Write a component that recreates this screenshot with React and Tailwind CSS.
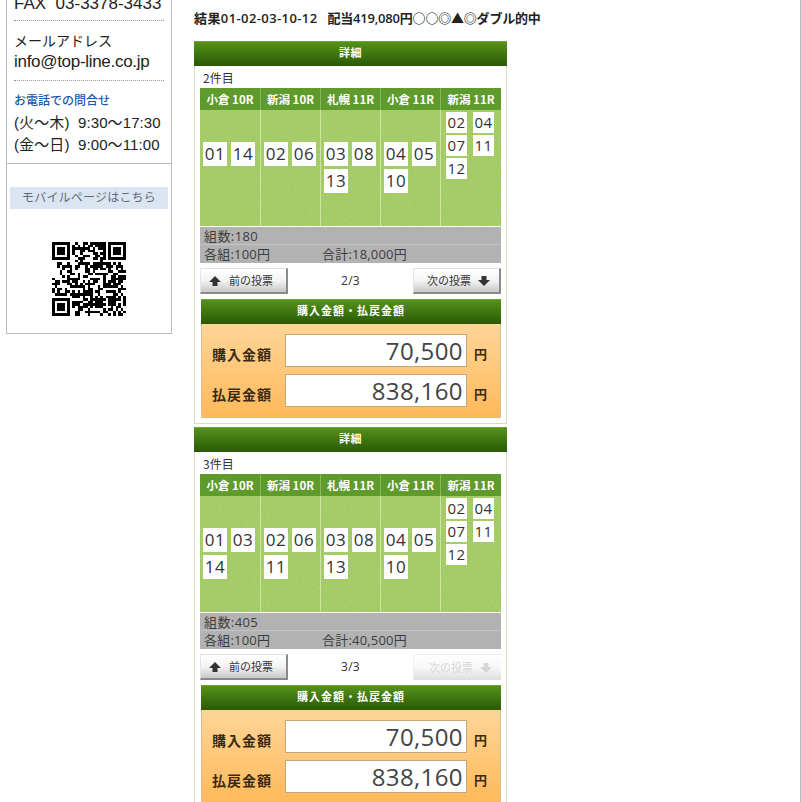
const jp = "font-['Noto_Sans_CJK_JP',sans-serif]";
const droid = "font-['Open_Sans','Noto_Sans_CJK_JP',sans-serif]";
const helv = "font-['Liberation_Sans','Noto_Sans_CJK_JP',sans-serif]";

function QrCode() {
  const size = 29;
  let seed = 40503;
  const cells = [];
  const inFinder = (x, y) =>
    (x < 8 && y < 8) || (x >= size - 8 && y < 8) || (x < 8 && y >= size - 8);
  for (let y = 0; y < size; y++) {
    for (let x = 0; x < size; x++) {
      seed = (seed * 75 + 74) % 65537;
      if (!inFinder(x, y) && seed % 100 < 55) {
        cells.push(<rect key={`${x}-${y}`} x={x} y={y} width="1" height="1" />);
      }
    }
  }
  const finder = (x, y) => (
    <g key={`${x}-${y}`}>
      <rect x={x} y={y} width="7" height="7" />
      <rect x={x + 1} y={y + 1} width="5" height="5" fill="#fff" />
      <rect x={x + 2} y={y + 2} width="3" height="3" />
    </g>
  );
  return (
    <svg viewBox="0 0 29 29" className="block h-[74px] w-[74px]" shapeRendering="crispEdges">
      {cells}
      {finder(0, 0)}
      {finder(22, 0)}
      {finder(0, 22)}
    </svg>
  );
}

function Sidebar() {
  return (
    <aside className={`ml-[6px] h-[342px] w-[166px] shrink-0 -mt-[8px] border-x border-b border-[#bbbbbb] ${helv} text-[#222]`}>
      <div className="mx-[7px] h-[29px] border-b border-dotted border-[#999] text-[17px] leading-[24px] whitespace-pre">
        FAX  03-3378-3433
      </div>
      <div className="mx-[7px] h-[60px] border-b border-dotted border-[#999] pt-[10px]">
        <p className="text-[14px] leading-[20px]">メールアドレス</p>
        <p className="text-[17px] leading-[22px] tracking-[-0.3px]">info@top-line.co.jp</p>
      </div>
      <div className="mx-[7px] h-[82px] pt-[12px]">
        <p className="text-[12px] leading-[16px] font-medium text-[#1a56ad]">お電話での問合せ</p>
        <p className="mt-[3px] text-[15px] leading-[22px] tracking-[0.1px] whitespace-pre">(火～木)  9:30～17:30</p>
        <p className="text-[15px] leading-[22px] tracking-[0.1px] whitespace-pre">(金～日)  9:00～11:00</p>
      </div>
      <div className="border-t border-[#bbbbbb] pt-[23px]">
        <p className="mx-[3px] h-[22px] bg-[#dbe5f2] text-center text-[12px] leading-[22px] tracking-[0.2px] text-[#5f6974]">
          モバイルページはこちら
        </p>
        <div className="mt-[33px] flex justify-center">
          <QrCode />
        </div>
      </div>
    </aside>
  );
}

function Tile({ n, small }) {
  return (
    <span
      className={`flex items-center justify-center bg-white tracking-[0.5px] ${droid} text-[#333] ${
        small ? "h-[21px] w-[21px] text-[15px]" : "h-[24px] w-[24px] text-[17px]"
      }`}
    >
      {n}
    </span>
  );
}

function TileCol({ rows }) {
  return (
    <div className="grid h-[116px] grid-cols-[24px_24px] content-start gap-x-[4px] gap-y-[3px] border-r border-[#cfe3a0] pl-[3px] pt-[32px]">
      {rows.map((n) => (
        <Tile key={n} n={n} />
      ))}
    </div>
  );
}

function GrassTexture() {
  return (
    <svg className="pointer-events-none absolute inset-0 h-full w-full opacity-60" aria-hidden="true">
      <filter id="grass" x="0" y="0" width="100%" height="100%">
        <feTurbulence type="fractalNoise" baseFrequency="0.6" numOctaves="2" seed="4" />
        <feColorMatrix values="0 0 0 0 0.42  0 0 0 0 0.62  0 0 0 0 0.22  4 0 0 0 -1.6" />
      </filter>
      <rect width="100%" height="100%" filter="url(#grass)" />
    </svg>
  );
}

function BarHeader({ children, className = "" }) {
  return (
    <div
      className={`h-[25px] border-t border-[#6fa52f] bg-gradient-to-b from-[#55921c] to-[#2a5905] text-center text-[11px] leading-[21px] font-bold tracking-[0.5px] text-white ${jp} ${className}`}
    >
      {children}
    </div>
  );
}

function Arrow({ down, className = "" }) {
  return (
    <svg viewBox="0 0 12 12" className={`h-[12px] w-[12px] ${className}`} fill="currentColor">
      {down ? <path d="M3.5 1h5v4h3.5L6 11 0 5h3.5z" /> : <path d="M6 1l6 6H8.5v4h-5V7H0z" />}
    </svg>
  );
}

function PagerButton({ down, disabled, children }) {
  return (
    <button
      className={`flex h-[26px] w-[88px] items-center border-t border-l border-[#e4e4e4] bg-gradient-to-b from-white via-[#f4f4f4] to-[#c8c8c8] text-[11px] ${jp} ${
        down ? "justify-end gap-[7px] pr-[9px]" : "justify-start gap-[8px] pl-[8px]"
      } ${
        disabled
          ? "text-[#bbbbbb] opacity-60"
          : "border-r-2 border-b-2 border-r-[#8a8a8a] border-b-[#8a8a8a] text-[#333]"
      }`}
    >
      {!down && <Arrow />}
      <span>{children}</span>
      {down && <Arrow down />}
    </button>
  );
}

function Amount({ label, value }) {
  return (
    <div className="flex h-[33px] items-center">
      <span className={`w-[83px] shrink-0 pl-[10px] pt-[7px] text-[14px] font-bold tracking-[1px] whitespace-nowrap text-[#3a2a10] ${jp}`}>
        {label}
      </span>
      <span
        className={`flex h-[33px] w-[182px] items-center justify-end border border-[#c4a677] bg-white pr-[3px] text-[24px] tracking-[0.4px] text-[#444] ${droid}`}
      >
        {value}
      </span>
      <span className={`ml-[7px] pt-[7px] text-[13px] font-bold text-[#3a2a10] ${jp}`}>円</span>
    </div>
  );
}

const venues = ["小倉 10R", "新潟 10R", "札幌 11R", "小倉 11R", "新潟 11R"];

function DetailPanel({ index, columns, combos, total, page, nextDisabled }) {
  return (
    <section className="w-[313px]">
      <BarHeader>詳細</BarHeader>
      <div className="h-[358px] border-x border-b border-[#d9dcc0] px-[5px]">
        <p className={`h-[22px] pl-[3px] pt-[4px] text-[12px] leading-[16px] text-[#333] ${jp}`}>{index}件目</p>
        <div className="grid w-[301px] grid-cols-[61px_60px_60px_60px_60px] bg-[#5f9b2c]">
          {venues.map((v) => (
            <div
              key={v}
              className={`h-[22px] border-r border-[#88b75e] text-center text-[11.5px] leading-[22px] font-bold whitespace-nowrap text-white last:border-r-0 ${jp}`}
            >
              {v}
            </div>
          ))}
        </div>
        <div className="relative grid w-[301px] grid-cols-[61px_60px_60px_60px_60px] bg-[#a2cb60]">
          <GrassTexture />
          {columns.map((rows) => (
            <div key={rows.join()} className="relative">
              <TileCol rows={rows} />
            </div>
          ))}
          <div className="relative flex gap-[6px] pl-[5px] pt-[2px]">
            <div className="flex flex-col gap-[2px]">
              <Tile small n="02" />
              <Tile small n="07" />
              <Tile small n="12" />
            </div>
            <div className="flex flex-col gap-[2px]">
              <Tile small n="04" />
              <Tile small n="11" />
            </div>
          </div>
        </div>
        <div className={`mt-px w-[301px] bg-[#b2b2b2] text-[13px] text-[#3d3d3d] ${droid}`}>
          <p className="h-[18px] border-b border-[#c4c4c4] pl-[4px] leading-[19px] tracking-[0.4px]">組数:{combos}</p>
          <p className="flex h-[18px] pl-[4px] leading-[19px] tracking-[0.2px]">
            <span className="w-[118px]">各組:100円</span>
            <span>合計:{total}円</span>
          </p>
        </div>
        <div className="mt-[5px] flex w-[301px] items-center justify-between">
          <PagerButton>前の投票</PagerButton>
          <span className={`text-[12px] tracking-[0.3px] text-[#333] ${droid}`}>{page}/3</span>
          <PagerButton down disabled={nextDisabled}>次の投票</PagerButton>
        </div>
        <BarHeader className="mt-[5px] ml-px w-[300px] tracking-[1px]">購入金額・払戻金額</BarHeader>
        <div className="ml-px flex h-[94px] w-[300px] flex-col gap-[7px] border-x border-b border-[#d8bf8f] bg-gradient-to-b from-[#ffd596] to-[#ffb959] pt-[10px]">
          <Amount label="購入金額" value="70,500" />
          <Amount label="払戻金額" value="838,160" />
        </div>
      </div>
    </section>
  );
}

export default function App() {
  return (
    <div className="flex h-[802px] w-[801px] items-start overflow-hidden border-r border-[#bbbbbb] bg-white">
      <Sidebar />
      <main className="ml-[22px] w-[313px]">
        <p className={`h-[41px] pt-[9px] text-[13px] leading-[18px] font-semibold tracking-[0.4px] whitespace-nowrap text-[#222] ${droid}`}>
          結果01-02-03-10-12<span className="ml-[10px] tracking-[-0.2px]">配当419,080円○○◎▲◎ダブル的中</span>
        </p>
        <div className="flex flex-col gap-[3px]">
          <DetailPanel
            index={2}
            columns={[["01", "14"], ["02", "06"], ["03", "08", "13"], ["04", "05", "10"]]}
            combos="180"
            total="18,000"
            page={2}
          />
          <DetailPanel
            index={3}
            columns={[["01", "03", "14"], ["02", "06", "11"], ["03", "08", "13"], ["04", "05", "10"]]}
            combos="405"
            total="40,500"
            page={3}
            nextDisabled
          />
        </div>
      </main>
    </div>
  );
}
